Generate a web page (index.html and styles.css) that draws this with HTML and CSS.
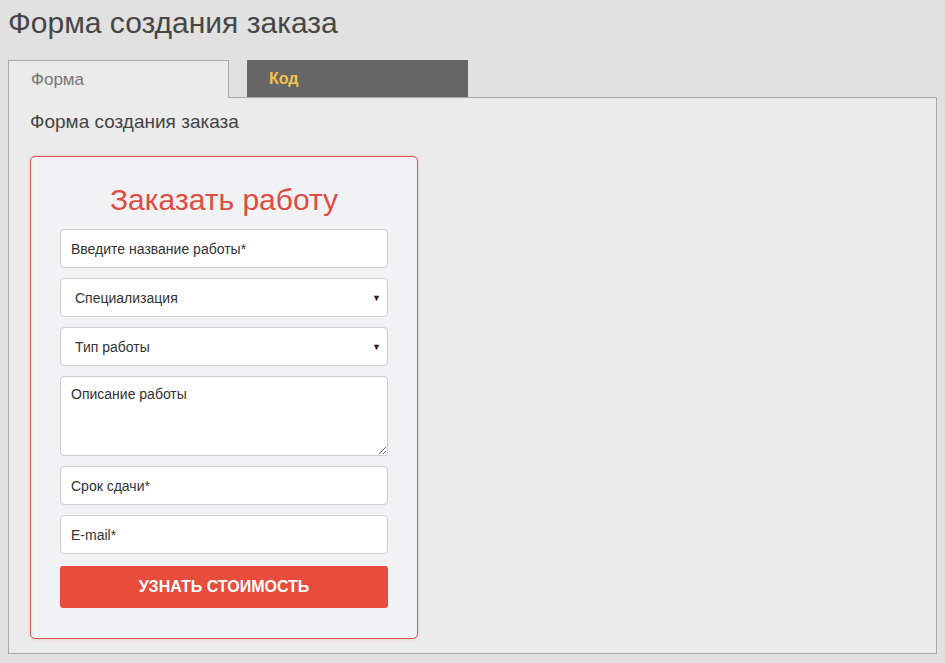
FILE: index.html
```html
<!DOCTYPE html>
<html lang="ru">
<head>
<meta charset="utf-8">
<title>Форма создания заказа</title>
<link rel="stylesheet" href="styles.css">
</head>
<body>
<h1 class="page-title">Форма создания заказа</h1>
<div class="tabs">
  <div class="tab tab-active">Форма</div>
  <div class="tab tab-dark">Код</div>
</div>
<div class="panel">
  <div class="panel-title">Форма создания заказа</div>
  <div class="card">
    <div class="card-title">Заказать работу</div>
    <div class="fields">
      <input class="field" type="text" placeholder="Введите название работы*">
      <div class="field select"><span>Специализация</span><span class="arrow">▼</span></div>
      <div class="field select"><span>Тип работы</span><span class="arrow">▼</span></div>
      <textarea class="field area" placeholder="Описание работы"></textarea>
      <input class="field" type="text" placeholder="Срок сдачи*">
      <input class="field" type="text" placeholder="E-mail*">
      <button class="btn" type="button">Узнать стоимость</button>
    </div>
  </div>
</div>
</body>
</html>
```
FILE: styles.css
```css
html, body {
  margin: 0;
  padding: 0;
  background: #e1e1e1;
}
body {
  padding: 8px 8px 0 8px;
  font-family: "Liberation Sans", Arial, sans-serif;
  color: #444;
}
.page-title {
  margin: 0;
  font-size: 30px;
  font-weight: normal;
  line-height: 30px;
  color: #464646;
}
.tabs {
  display: flex;
  gap: 18px;
  margin-top: 22px;
  height: 37px;
  position: relative;
  z-index: 1;
}
.tab {
  width: 221px;
  box-sizing: border-box;
  padding-left: 22px;
  font-size: 16px;
  line-height: 37px;
}
.tab-active {
  background: #ebebeb;
  border: 1px solid #a9a9a9;
  border-bottom: none;
  height: 38px;
  color: #777;
  font-size: 17px;
}
.tab-dark {
  background: #666;
  color: #f2c34d;
  font-weight: bold;
}
.panel {
  width: 929px;
  height: 557px;
  box-sizing: border-box;
  background: #ebebeb;
  border: 1px solid #a9a9a9;
  padding: 12px 21px;
}
.panel-title {
  font-size: 19px;
  line-height: 24px;
  color: #444;
}
.card {
  margin-top: 22px;
  width: 388px;
  box-sizing: border-box;
  background: #f1f2f4;
  border: 1px solid #d9574f;
  border-radius: 5px;
  box-shadow: 0 0 3px rgba(230, 120, 110, 0.35);
  padding: 22px 29px 30px 29px;
}
.card-title {
  text-align: center;
  font-size: 30px;
  line-height: 42px;
  color: #dd4d43;
  margin-bottom: 8px;
}
.fields {
  display: flex;
  flex-direction: column;
  gap: 10px;
}
.field {
  box-sizing: border-box;
  width: 328px;
  height: 39px;
  flex: none;
  margin: 0;
  background: #fff;
  border: 1px solid #cfcfcf;
  border-radius: 4px;
  padding: 0 10px;
  font-family: "Liberation Sans", Arial, sans-serif;
  font-size: 14px;
  color: #333;
  outline: none;
}
.field::placeholder {
  color: #333;
  opacity: 1;
}
.select {
  display: flex;
  align-items: center;
  justify-content: space-between;
  padding: 0 6px 0 14px;
}
.arrow {
  font-size: 9px;
  color: #222;
}
.area {
  height: 80px;
  padding: 8px 10px;
  resize: vertical;
  line-height: 18px;
}
.btn {
  width: 328px;
  height: 42px;
  flex: none;
  margin-top: 2px;
  border: none;
  border-radius: 3px;
  background: #e74c3c;
  color: #fff;
  font-family: "Liberation Sans", Arial, sans-serif;
  font-size: 16px;
  font-weight: bold;
  text-transform: uppercase;
  cursor: pointer;
}
```
